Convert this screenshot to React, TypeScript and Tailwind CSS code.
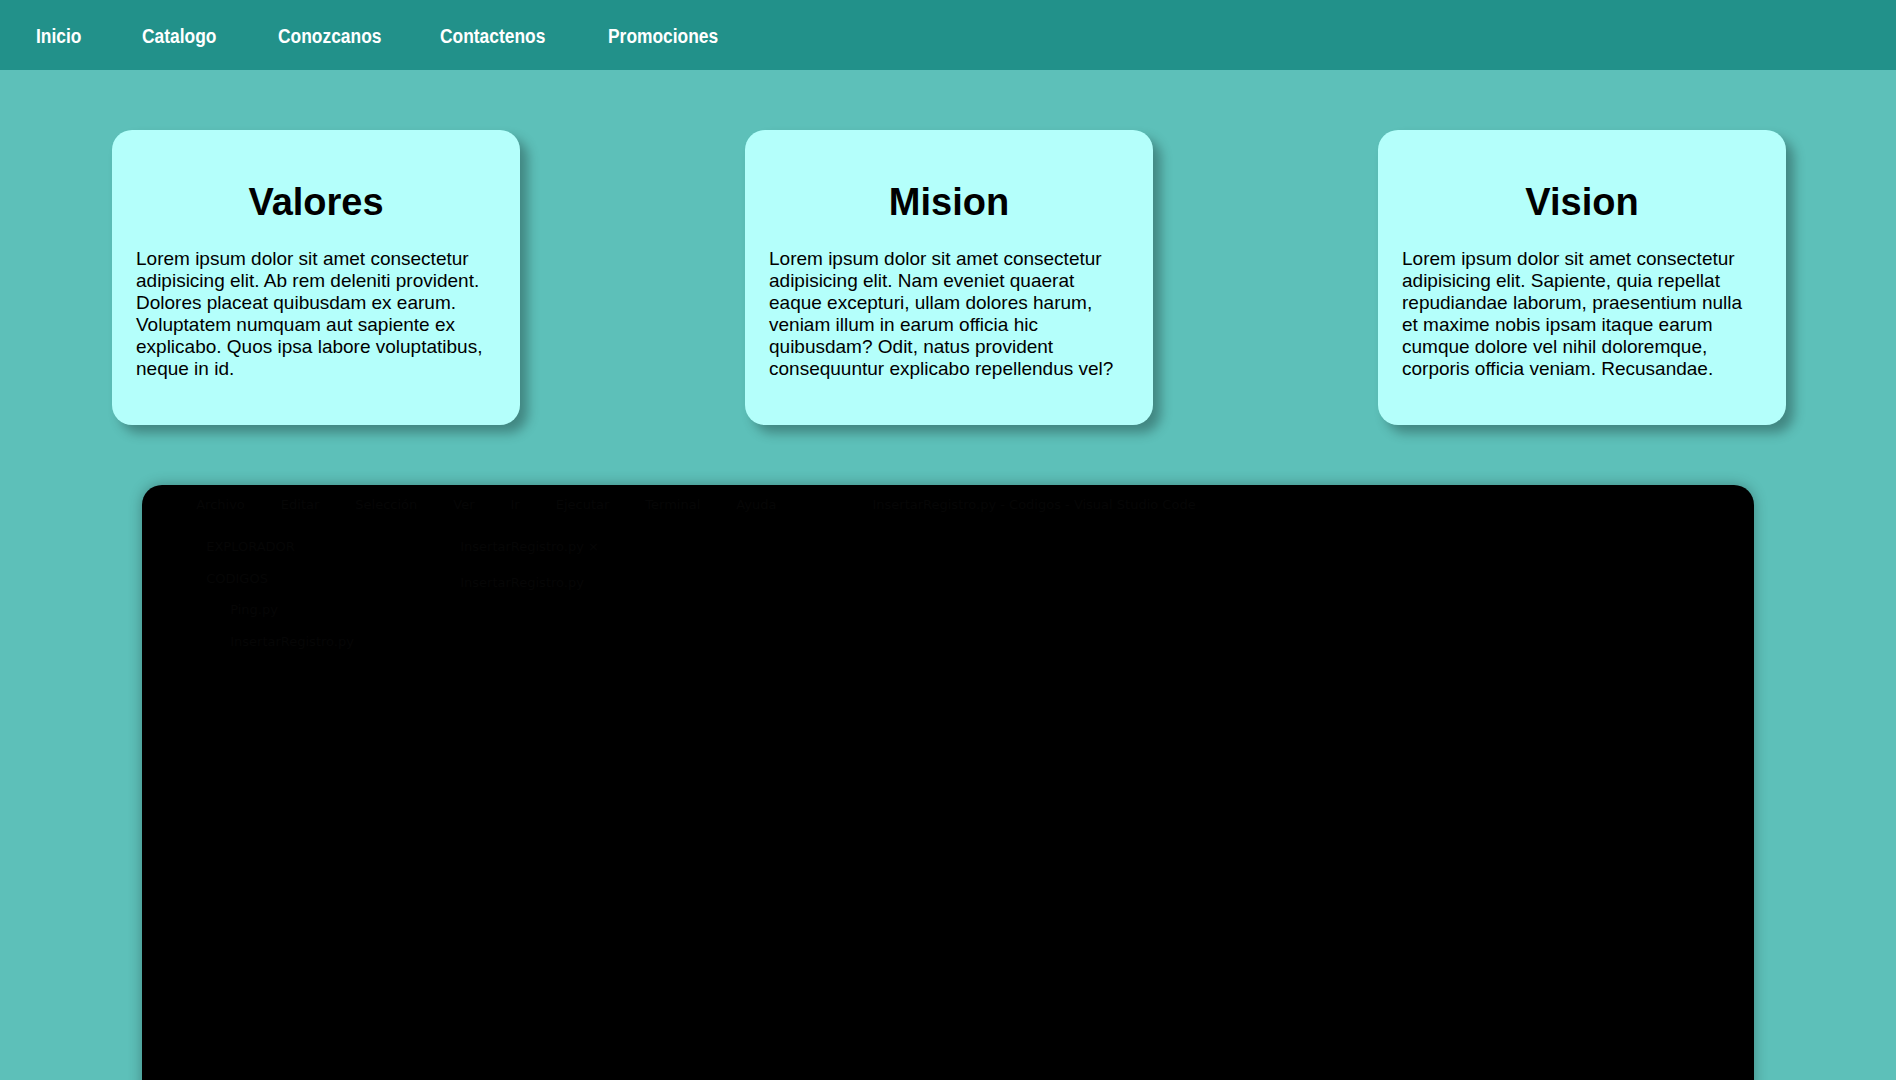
const links = [
  { label: "Inicio", w: "w-[45px]" },
  { label: "Catalogo", w: "w-[75px]" },
  { label: "Conozcanos", w: "w-[101px]" },
  { label: "Contactenos", w: "w-[107px]" },
  { label: "Promociones", w: "w-[109px]" },
];

const cards = [
  {
    title: "Valores",
    text: "Lorem ipsum dolor sit amet consectetur adipisicing elit. Ab rem deleniti provident. Dolores placeat quibusdam ex earum. Voluptatem numquam aut sapiente ex explicabo. Quos ipsa labore voluptatibus, neque in id.",
  },
  {
    title: "Mision",
    text: "Lorem ipsum dolor sit amet consectetur adipisicing elit. Nam eveniet quaerat eaque excepturi, ullam dolores harum, veniam illum in earum officia hic quibusdam? Odit, natus provident consequuntur explicabo repellendus vel?",
  },
  {
    title: "Vision",
    text: "Lorem ipsum dolor sit amet consectetur adipisicing elit. Sapiente, quia repellat repudiandae laborum, praesentium nulla et maxime nobis ipsam itaque earum cumque dolore vel nihil doloremque, corporis officia veniam. Recusandae.",
  },
];

const menu = ["Archivo", "Editar", "Selección", "Ver", "Ir", "Ejecutar", "Terminal", "Ayuda"];

export default function App() {
  return (
    <div className="min-h-screen bg-[#5dc0b9] font-['Liberation_Sans',Arial,sans-serif]">
      <nav className="flex h-[70px] items-center gap-[61px] bg-[#22918a] pl-9 pt-[2px]">
        {links.map((l) => (
          <a key={l.label} href="#" className={`block ${l.w} whitespace-nowrap`}>
            <span className="inline-block origin-left scale-x-[0.87] text-[20px] font-bold text-white">
              {l.label}
            </span>
          </a>
        ))}
      </nav>

      <section className="flex justify-center gap-[225px] pt-[60px] pl-[2px]">
        {cards.map((c) => (
          <div
            key={c.title}
            className="w-[408px] rounded-[20px] bg-[#b4fffb] px-6 pt-6 pb-[45px] shadow-[8px_8px_12px_rgba(0,0,0,0.3)]"
          >
            <h2 className="mt-[26px] mb-6 text-center text-[38px] font-bold leading-[44px] text-black">
              {c.title}
            </h2>
            <p className="text-[19px] leading-[22px] text-black">{c.text}</p>
          </div>
        ))}
      </section>

      <section className="pt-[60px]">
        <div className="mx-auto h-[909px] w-[85%] overflow-hidden rounded-[20px] bg-black shadow-[0_0_14px_rgba(0,0,0,0.3)]">
          <div className="flex h-[40px] items-center gap-9 pl-[54px] font-['DejaVu_Sans',sans-serif] text-[13px] text-[#060606]">
            {menu.map((m) => (
              <span key={m}>{m}</span>
            ))}
            <span className="ml-[60px]">InsertarRegistro.py - Codigos - Visual Studio Code</span>
          </div>
          <div className="flex font-['DejaVu_Sans',sans-serif] text-[13px] text-[#060606]">
            <div className="w-[48px]" />
            <div className="flex w-[270px] flex-col gap-3 pt-3 pl-4">
              <span>EXPLORADOR</span>
              <span>CODIGOS</span>
              <span className="pl-6">Ping.py</span>
              <span className="pl-6">InsertarRegistro.py</span>
            </div>
            <div className="flex flex-col gap-4 pt-3">
              <span>InsertarRegistro.py ×</span>
              <span>InsertarRegistro.py</span>
            </div>
          </div>
        </div>
      </section>
    </div>
  );
}
